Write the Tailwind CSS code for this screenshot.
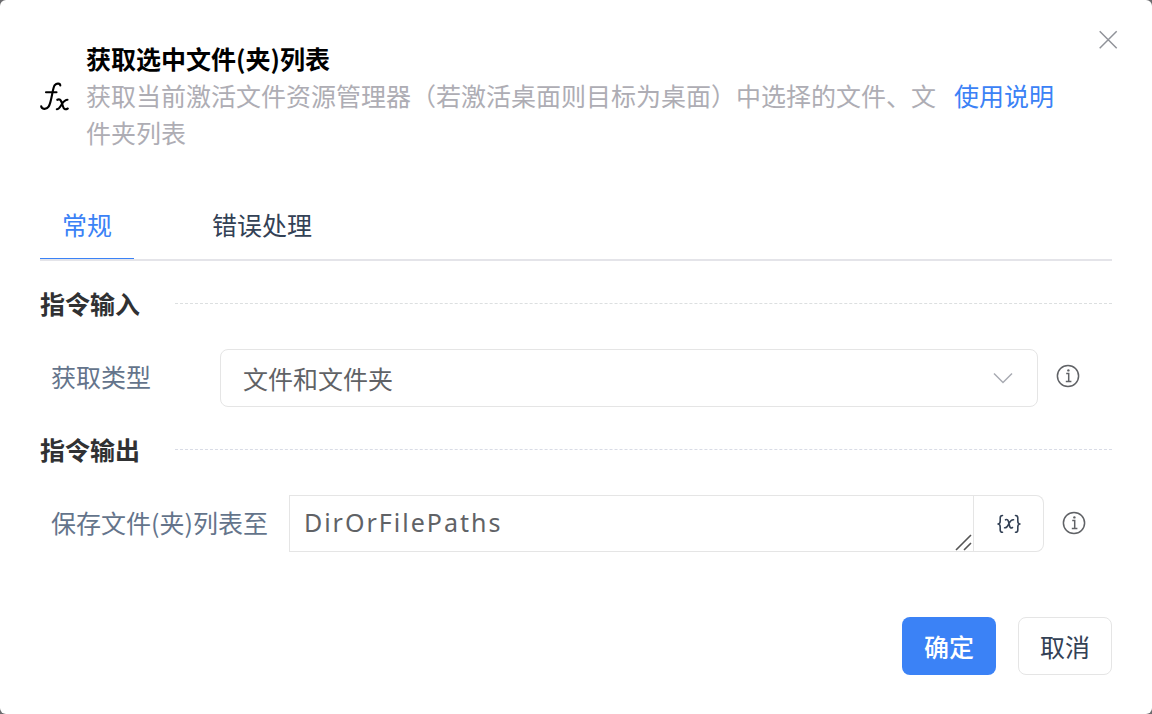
<!DOCTYPE html>
<html lang="zh-CN">
<head>
<meta charset="utf-8">
<meta name="viewport" content="width=device-width, initial-scale=1">
<title>获取选中文件(夹)列表</title>
<script src="https://cdn.jsdelivr.net/npm/@tailwindcss/browser@4"></script>
</head>
<body class="bg-[#6b6b6e] font-['Noto_Sans_CJK_SC',sans-serif] text-[25px] leading-[37px]">
<main role="dialog" aria-labelledby="title" class="relative flex min-h-screen flex-col rounded-md bg-white p-10 pb-[39px]">
  <button type="button" aria-label="关闭" class="absolute top-7 right-8 flex size-6 items-center justify-center text-[#909399]">
    <svg class="size-6" viewBox="0 0 24 24" fill="none" stroke="currentColor" stroke-width="1.5"><path d="M3.7 3.2 20.7 20.2M20.7 3.2 3.7 20.2"/></svg>
  </button>

  <header class="flex items-center">
    <svg class="mr-4 h-[30px] w-[30px] shrink-0" viewBox="0 0 30 30" fill="none" stroke="#000" stroke-width="2.1" stroke-linecap="round" stroke-linejoin="round">
      <path d="M20.3 4.5C20.2 2.4 16.8 1.8 14.7 4.2C12.3 7.5 11.7 21.1 8.6 25.6C6.4 28.9 1.5 28.4 1.2 25.2M6 11.2H16.5"/>
      <path d="M17.3 18.8C19.6 17.6 20.6 18.9 21.5 21L22.9 25.2C23.8 28.4 25.4 28.9 27.8 27.5M27.5 18.8C25 18.8 23.8 20.3 22 23C20 26.1 19 28.3 16.8 28.3"/>
    </svg>
    <div class="min-w-0 flex-1">
      <h1 id="title" class="font-bold text-black">获取选中文件(夹)列表</h1>
      <p class="text-[#aeadb4]">获取当前激活文件资源管理器（若激活桌面则目标为桌面）中选择的文件、文件夹列表</p>
    </div>
    <a href="#help" class="mr-[58px] ml-4 shrink-0 text-[#3b82f6]">使用说明</a>
  </header>

  <div role="tablist" class="mt-10 flex border-b-2 border-[#e4e4e9]">
    <button type="button" role="tab" aria-selected="true" class="mr-14 border-b border-[#3b82f6] px-[22px] py-[15px] text-[#3b82f6]">常规</button>
    <button type="button" role="tab" aria-selected="false" class="border-b border-transparent px-[22px] py-[15px] text-[#334155]">错误处理</button>
  </div>

  <section class="mt-6">
    <div class="flex items-center gap-[35px]">
      <h2 class="font-bold text-[#303133]">指令输入</h2>
      <div class="flex-1 border-t border-dashed border-[#dcdfe0]"></div>
    </div>
    <div class="mt-[27px] flex items-center pr-8 pl-[11px]">
      <label for="kind" class="w-[169px] shrink-0 pb-1 text-[#64748b]">获取类型</label>
      <div class="relative flex-1">
        <select id="kind" class="block h-[58px] w-full appearance-none rounded-lg border border-[#e5e5e5] bg-white px-[22px] text-[#606266]">
          <option>文件和文件夹</option>
        </select>
        <svg class="pointer-events-none absolute top-5 right-6 h-[18px] w-[22px]" viewBox="0 0 22 18" fill="none" stroke="#a8abb2" stroke-width="1.5"><path d="M2 4.5 11 13.5 20 4.5"/></svg>
      </div>
      <svg class="mb-1 ml-[18px] size-6 shrink-0" viewBox="0 0 24 24" fill="none" stroke="#606266" stroke-width="1.5"><circle cx="12" cy="12" r="10.6"/><path d="M10.2 9.5H12.7V17.3M9.8 17.5H15.4"/><circle cx="12.4" cy="6.4" r="1.2" fill="#606266" stroke="none"/></svg>
    </div>
  </section>

  <section class="mt-6">
    <div class="flex items-center gap-[35px]">
      <h2 class="font-bold text-[#303133]">指令输出</h2>
      <div class="flex-1 border-t border-dashed border-[#d9dce6]"></div>
    </div>
    <div class="mt-[27px] flex items-center pr-[26px] pl-[11px]">
      <label for="target" class="mr-[21px] shrink-0 pb-0.5 text-[#64748b]">保存文件(夹)列表至</label>
      <div class="flex h-[57px] flex-1">
        <div class="relative flex-1">
          <textarea id="target" rows="1" class="block h-full w-full resize-none overflow-hidden border border-[#e5e5e5] px-[14px] py-2 font-['Noto_Sans',sans-serif] tracking-[2px] text-[#606266]">DirOrFilePaths</textarea>
          <svg class="pointer-events-none absolute right-0.5 bottom-px size-[17px]" viewBox="0 0 17 17" fill="none" stroke="#555" stroke-width="1.6"><path d="M1 16 16 1M9 16 16 9"/></svg>
        </div>
        <button type="button" aria-label="选择变量" class="flex w-[70px] items-center justify-center rounded-r-lg border border-l-0 border-[#e5e5e5] text-[#334155]">
          <svg class="h-5 w-6" viewBox="0 0 24 20" fill="none" stroke="currentColor" stroke-width="1.6" stroke-linecap="round" stroke-linejoin="round"><path d="M5.5 1.5C3.4 1.5 3.2 2.4 3.2 4V7C3.2 9 2.4 10 1 10C2.4 10 3.2 11 3.2 13V16C3.2 17.7 3.6 18.3 5.5 18.3M18.5 1.5C20.6 1.5 20.8 2.4 20.8 4V7C20.8 9 21.6 10 23 10C21.6 10 20.8 11 20.8 13V16C20.8 17.7 20.4 18.3 18.5 18.3"/><path d="M8.5 5.8C10.3 5 11.1 6 11.6 8L12.6 12C13 13.8 13.9 14.5 15.5 13.5M16.5 5.8C14.4 5.4 13.6 6.6 12 9.4C10.4 12.5 9.7 14.4 7.6 13.7"/></svg>
        </button>
      </div>
      <svg class="mb-0.5 ml-[18px] size-6 shrink-0" viewBox="0 0 24 24" fill="none" stroke="#606266" stroke-width="1.5"><circle cx="12" cy="12" r="10.6"/><path d="M10.2 9.5H12.7V17.3M9.8 17.5H15.4"/><circle cx="12.4" cy="6.4" r="1.2" fill="#606266" stroke="none"/></svg>
    </div>
  </section>

  <footer class="mt-auto flex justify-end gap-[22px]">
    <button type="button" class="h-[58px] rounded-lg bg-[#3b82f6] px-[22px] font-medium text-white">确定</button>
    <button type="button" class="h-[58px] rounded-lg border border-[#e5e5e5] bg-white px-[21px] text-[#334155]">取消</button>
  </footer>
</main>
</body>
</html>
